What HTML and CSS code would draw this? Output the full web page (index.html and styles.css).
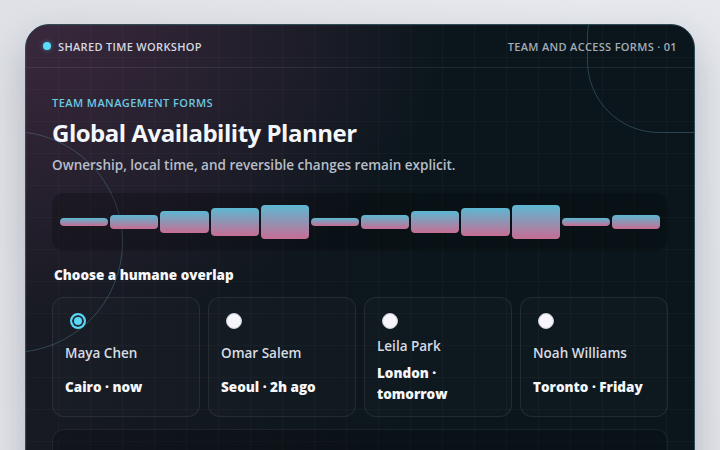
FILE: index.html
```html
<!DOCTYPE html>
<html lang="en">
<head>
    <meta charset="UTF-8">
    <meta name="viewport" content="width=device-width, initial-scale=1.0">
    <title>Global Availability Planner</title>
    <link rel="stylesheet" href="styles.css">
</head>
<body>
    <div class="shell">
        <div class="ring ring-left"></div>
        <div class="ring ring-right"></div>
        <header class="topbar">
            <div class="brand">
                <span class="brand-dot"></span>
                <span>Shared Time Workshop</span>
            </div>
            <span class="crumb">Team and Access Forms &middot; 01</span>
        </header>
        <main class="content">
            <p class="eyebrow">Team Management Forms</p>
            <h1>Global Availability Planner</h1>
            <p class="lead">Ownership, local time, and reversible changes remain explicit.</p>

            <div class="timeline">
                <span class="bar" style="height: 8px"></span>
                <span class="bar" style="height: 14px"></span>
                <span class="bar" style="height: 22px"></span>
                <span class="bar" style="height: 28px"></span>
                <span class="bar" style="height: 34px"></span>
                <span class="bar" style="height: 8px"></span>
                <span class="bar" style="height: 14px"></span>
                <span class="bar" style="height: 22px"></span>
                <span class="bar" style="height: 28px"></span>
                <span class="bar" style="height: 34px"></span>
                <span class="bar" style="height: 8px"></span>
                <span class="bar" style="height: 14px"></span>
            </div>

            <fieldset class="overlap">
                <legend>Choose a humane overlap</legend>
                <div class="people">
                    <label class="person">
                        <input type="radio" name="owner" checked>
                        <span class="name">Maya Chen</span>
                        <span class="place">Cairo &middot; now</span>
                    </label>
                    <label class="person">
                        <input type="radio" name="owner">
                        <span class="name">Omar Salem</span>
                        <span class="place">Seoul &middot; 2h ago</span>
                    </label>
                    <label class="person">
                        <input type="radio" name="owner">
                        <span class="name">Leila Park</span>
                        <span class="place">London &middot; tomorrow</span>
                    </label>
                    <label class="person">
                        <input type="radio" name="owner">
                        <span class="name">Noah Williams</span>
                        <span class="place">Toronto &middot; Friday</span>
                    </label>
                </div>
            </fieldset>

            <section class="panel"></section>
        </main>
    </div>
</body>
</html>
```

FILE: styles.css
```css
body {
    margin: 0;
    padding: 24px 0 0 25px;
    font-family: "Open Sans", "Noto Sans", sans-serif;
    background: linear-gradient(120deg, #dfe1e7 0%, #e7e9ef 60%, #e3e5eb 100%);
    height: 450px;
    overflow: hidden;
    box-sizing: border-box;
}
.shell {
    position: relative;
    width: 670px;
    min-height: 460px;
    box-sizing: border-box;
    border: 1px solid #2c4b54;
    border-radius: 24px;
    overflow: hidden;
    background-color: #0b151b;
    background-image:
        linear-gradient(rgba(255,255,255,0.025) 1px, transparent 1px),
        linear-gradient(90deg, rgba(255,255,255,0.025) 1px, transparent 1px),
        radial-gradient(ellipse 420px 300px at 0 0, rgba(70,45,70,0.75), rgba(70,45,70,0) 100%),
        linear-gradient(90deg, #171a22 0%, #0b161c 60%);
    background-size: 32px 32px, 32px 32px, auto, auto;
    box-shadow: 0 18px 40px rgba(30,40,60,0.25);
}
.ring {
    position: absolute;
    border: 1px solid rgba(110,175,195,0.3);
    pointer-events: none;
}
.ring-left {
    left: -125px;
    top: 106px;
    width: 220px;
    height: 220px;
    border-radius: 50%;
}
.ring-right {
    left: 561px;
    top: -60px;
    width: 240px;
    height: 166px;
    border-radius: 72px;
}
.topbar {
    display: flex;
    align-items: center;
    justify-content: space-between;
    height: 42px;
    padding: 0 17px 0 17px;
    border-bottom: 1px solid rgba(255,255,255,0.08);
    font-size: 11px;
    font-weight: 600;
    letter-spacing: 0.03em;
    text-transform: uppercase;
}
.brand {
    display: flex;
    align-items: center;
    gap: 7px;
    color: #d4d8e0;
}
.brand-dot {
    width: 8px;
    height: 8px;
    border-radius: 50%;
    background-color: #5cdcfb;
    box-shadow: 0 0 5px rgba(92,220,251,0.45);
}
.crumb {
    color: #a3acb6;
}
.content {
    position: relative;
    padding: 27px 26px 0 26px;
}
.eyebrow {
    margin: 0;
    font-size: 11px;
    font-weight: 600;
    letter-spacing: 0.04em;
    text-transform: uppercase;
    color: #6cc8e0;
}
h1 {
    margin: 6px 0 0 0;
    font-size: 24px;
    font-weight: 700;
    letter-spacing: -0.02em;
    color: #f4f6fa;
}
.lead {
    margin: 7px 0 0 0;
    font-size: 13.5px;
    font-weight: 600;
    color: #b8bec8;
}
.timeline {
    display: flex;
    align-items: center;
    gap: 2px;
    height: 58px;
    margin-top: 19px;
    padding: 0 8px;
    border-radius: 12px;
    background-color: rgba(0,0,0,0.22);
}
.bar {
    flex: 1;
    border-radius: 4px;
    background: linear-gradient(#5cb8d2, #c76d93);
}
.overlap {
    margin: 15px 0 0 0;
    padding: 0;
    border: none;
}
.overlap legend {
    padding: 0 2px;
    font-size: 13.5px;
    font-weight: 800;
    color: #f6f7fa;
}
.people {
    display: grid;
    grid-template-columns: repeat(4, 1fr);
    gap: 8px;
    margin-top: 13px;
}
.person {
    display: grid;
    gap: 8px;
    padding: 12px 12px 11px 12px;
    border: 1px solid rgba(255,255,255,0.08);
    border-radius: 12px;
    background-color: rgba(255,255,255,0.015);
    cursor: pointer;
}
.person input {
    appearance: none;
    justify-self: start;
    width: 16px;
    height: 16px;
    margin: 3px 0 0 5px;
    border-radius: 50%;
    background-color: #f5f5fb;
    border: 1px solid #c9ccd6;
}
.person input:checked {
    border: 2px solid #5cd6f6;
    background-color: #5cd6f6;
    box-shadow: inset 0 0 0 2px #1d2a33;
}
.name {
    font-size: 13.5px;
    font-weight: 600;
    line-height: 18px;
    color: #d8dce4;
}
.place {
    font-size: 13.5px;
    font-weight: 800;
    line-height: 21px;
    color: #f6f7fa;
}
.panel {
    height: 60px;
    margin-top: 12px;
    border: 1px solid rgba(255,255,255,0.07);
    border-radius: 12px;
    background-color: rgba(0,0,0,0.18);
}
```
